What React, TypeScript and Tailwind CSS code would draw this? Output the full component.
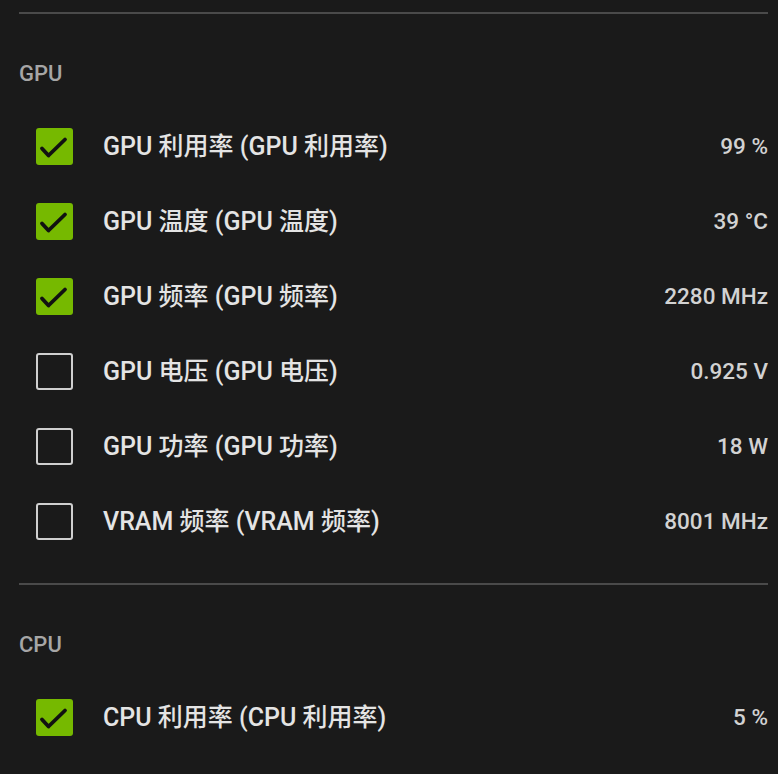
import { Fragment } from "react";

type Metric = {
  label: string;
  value: string;
  checked: boolean;
};

const sections: { title: string; items: Metric[] }[] = [
  {
    title: "GPU",
    items: [
      { label: "GPU 利用率 (GPU 利用率)", value: "99 %", checked: true },
      { label: "GPU 温度 (GPU 温度)", value: "39 °C", checked: true },
      { label: "GPU 频率 (GPU 频率)", value: "2280 MHz", checked: true },
      { label: "GPU 电压 (GPU 电压)", value: "0.925 V", checked: false },
      { label: "GPU 功率 (GPU 功率)", value: "18 W", checked: false },
      { label: "VRAM 频率 (VRAM 频率)", value: "8001 MHz", checked: false },
    ],
  },
  {
    title: "CPU",
    items: [{ label: "CPU 利用率 (CPU 利用率)", value: "5 %", checked: true }],
  },
];

function Checkbox({ checked }: { checked: boolean }) {
  if (checked) {
    return (
      <div className="w-[37px] h-[37px] shrink-0 rounded-[3px] bg-[#76b900]">
        <svg width="37" height="37" viewBox="0 0 37 37" fill="none">
          <path
            d="M6 20.5 L12.5 27.5 L29 11.5"
            stroke="#111"
            strokeWidth="3.8"
            strokeLinecap="round"
            strokeLinejoin="round"
          />
        </svg>
      </div>
    );
  }
  return (
    <div className="w-[37px] h-[37px] shrink-0 rounded-[3px] border-2 border-[#cfcfcf]" />
  );
}

export default function App() {
  return (
    <div
      className="min-h-screen bg-[#1a1a1a] pl-[19px] pr-[10px] pt-[12px]"
      style={{ fontFamily: "Roboto, 'Noto Sans CJK SC', sans-serif" }}
    >
      {sections.map((section, i) => (
        <Fragment key={section.title}>
          <div className={`h-[2px] bg-[#4a4a4a] ${i > 0 ? "mt-[24px]" : ""}`} />
          <div className="pt-[48px] pb-[23px] text-[22px] leading-[24px] font-medium text-[#a6a6a6]">
            {section.title}
          </div>
          {section.items.map((item) => (
            <div key={item.label} className="h-[75px] flex items-center pl-[17px]">
              <Checkbox checked={item.checked} />
              <span className="ml-[30px] text-[25px] font-medium text-[#e4e4e4] whitespace-nowrap">
                {item.label}
              </span>
              <span className="ml-auto text-[22.5px] font-medium text-[#d2d2d2] whitespace-nowrap">
                {item.value}
              </span>
            </div>
          ))}
        </Fragment>
      ))}
    </div>
  );
}
